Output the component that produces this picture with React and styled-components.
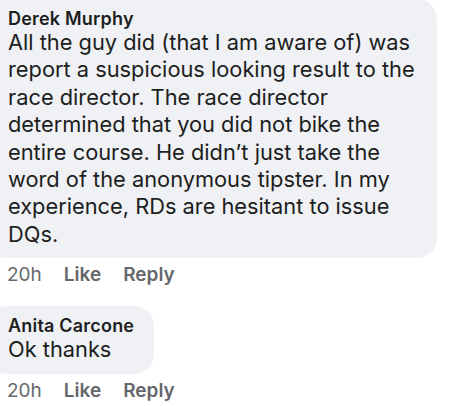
import React from "react";
import styled, { createGlobalStyle } from "styled-components";

const Global = createGlobalStyle`
  html, body { margin: 0; padding: 0; background: #ffffff; }
  body { font-family: Inter, "Liberation Sans", Arial, sans-serif; color: #1c1e21; overflow: hidden; }
`;

const Thread = styled.div`
  width: 454px;
  height: 406px;
  overflow: hidden;
  margin-top: -1px;
`;

const Comment = styled.div`
  display: flex;
  flex-direction: column;
  align-items: flex-start;
  margin-bottom: ${(p) => p.$gap || 0}px;
`;

const Bubble = styled.div`
  box-sizing: border-box;
  margin-left: -14px;
  padding: 9px 16px 10px 22px;
  background: #f0f1f4;
  border-radius: 20px;
  width: ${(p) => p.$width}px;
`;

const Name = styled.div`
  font-weight: 600;
  font-size: 18px;
  line-height: 21px;
  letter-spacing: 0.2px;
`;

const Body = styled.div`
  font-size: 21.8px;
  line-height: 27.4px;
`;

const Actions = styled.div`
  display: flex;
  gap: 22px;
  padding-left: 7px;
  margin-top: 6px;
  font-size: 19px;
  line-height: 22px;
  color: #65676b;
`;

const Action = styled.span`
  font-weight: ${(p) => (p.$bold ? 600 : 400)};
`;

function CommentItem({ name, lines, width, gap }) {
  return (
    <Comment $gap={gap}>
      <Bubble $width={width}>
        <Name>{name}</Name>
        <Body>
          {lines.map((l, i) => (
            <React.Fragment key={i}>
              {l}
              {i < lines.length - 1 && <br />}
            </React.Fragment>
          ))}
        </Body>
      </Bubble>
      <Actions>
        <Action>20h</Action>
        <Action $bold>Like</Action>
        <Action $bold>Reply</Action>
      </Actions>
    </Comment>
  );
}

export default function App() {
  return (
    <>
      <Global />
      <Thread>
        <CommentItem
          name="Derek Murphy"
          width={451}
          gap={20}
          lines={[
            "All the guy did (that I am aware of) was",
            "report a suspicious looking result to the",
            "race director. The race director",
            "determined that you did not bike the",
            "entire course. He didn\u2019t just take the",
            "word of the anonymous tipster. In my",
            "experience, RDs are hesitant to issue",
            "DQs.",
          ]}
        />
        <CommentItem name="Anita Carcone" width={168} lines={["Ok thanks"]} />
      </Thread>
    </>
  );
}
